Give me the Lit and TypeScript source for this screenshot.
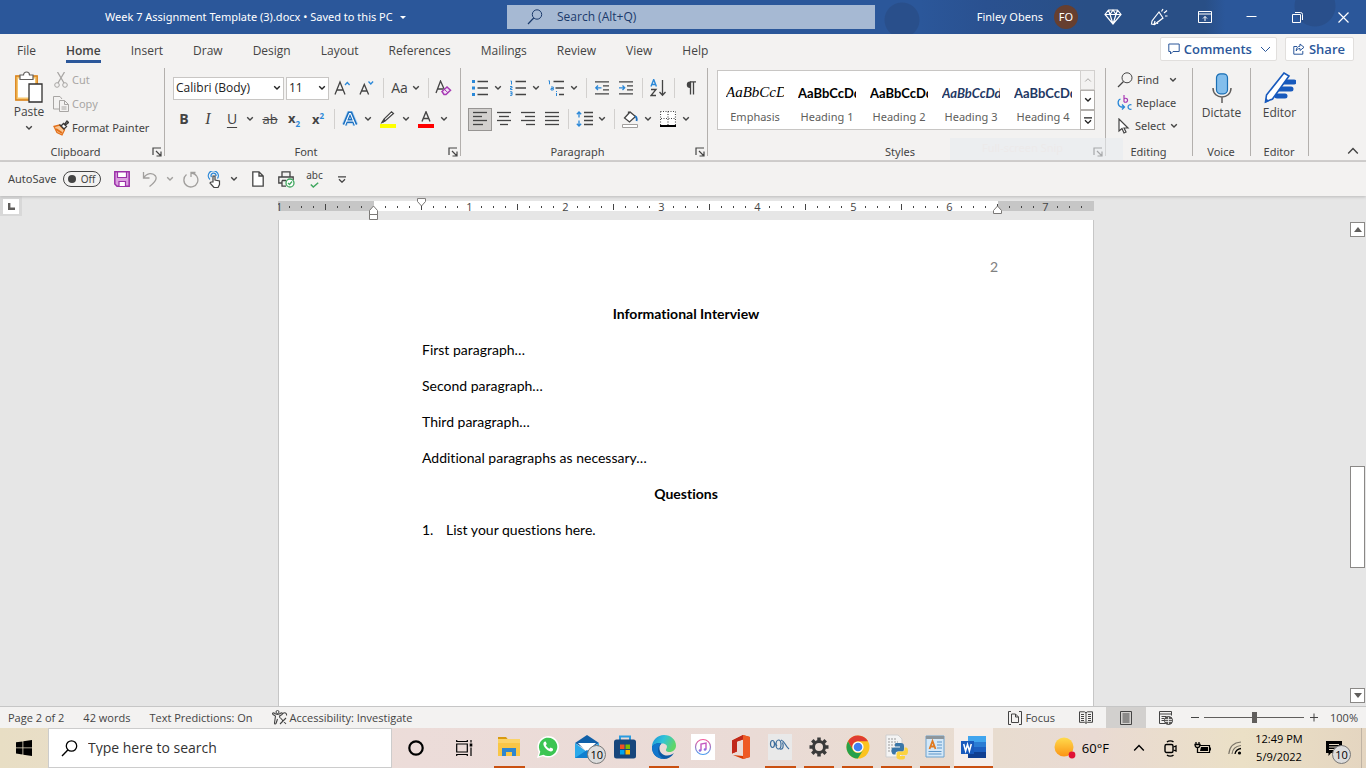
import { LitElement, html, svg, css, nothing, TemplateResult } from "lit";
import { customElement, state } from "lit/decorators.js";
import { classMap } from "lit/directives/class-map.js";

const icon = (w: number, h: number, body: unknown) =>
  html`<svg width=${w} height=${h} viewBox="0 0 ${w} ${h}" fill="none" stroke="currentColor" aria-hidden="true">${body}</svg>`;

const chevron = () => icon(8, 6, svg`<path d="M1.2 1.2 4 4 6.8 1.2" stroke-width="1.4"/>`);

const launcher = (name: string) => html`<button class="launcher" aria-label="${name} settings">
  ${icon(10, 10, svg`<path d="M1 8V1h8M4 4l4.500 4.500M9 4.500V9H4.500" stroke-width="1.200"/>`)}
</button>`;

const lines = (widths: [number, number][]) =>
  icon(16, 16, svg`${widths.map(([x, w], i) => svg`<path d="M${x} ${1.5 + i * 4}h${w}" stroke-width="1.300"/>`)}`);

const glyph = {
  diamond: icon(18, 16, svg`<path d="M4.500 1h9L17 5.500 9 15 1 5.500zM1 5.500h16M6 5.500 9 15l3-9.500M4.500 1 6 5.500 9 1l3 4.500L13.500 1" stroke-width="1.200"/>`),
  mega: icon(18, 18, svg`<path d="M9 4 2 13l-.500 3 3 .500L13 10zM9 4l4 6M5 13l-1 4M8 13l-.500 3M11.500 3.500 13 1M14 5l3-2.500M15 8h2.500" stroke-width="1.200"/>`),
  ribbonMode: icon(14, 12, svg`<path d="M.5.500h13v11H.5zM.5 3h13M7 10V5.500M5 7.500l2-2 2 2"/>`),
  minimise: icon(11, 11, svg`<path d="M.5 4.500h10"/>`),
  restore: icon(11, 11, svg`<path d="M.5 2.500h8v8h-8zM3 .500h5.500a2 2 0 0 1 2 2V8"/>`),
  close: icon(11, 11, svg`<path d="m.5.500 10 10M10.500.500l-10 10" stroke-width="1.200"/>`),
  search: icon(16, 16, svg`<circle cx="10" cy="5.500" r="4.700"/><path d="M6.700 9 1 15" stroke-width="1.200"/>`),
  comment: icon(12, 12, svg`<path d="M.8 1h10.400v7.500H5L2.500 11V8.500H.8z"/>`),
  share: icon(12, 12, svg`<path d="M4 3.500H.8v7.700h9V8M7 1l4 3.300-4 3.200V5.500C5 5.500 4 6.500 3.200 8c0-3 1.500-4.800 3.800-4.800z"/>`),
  paste: icon(28, 32, svg`<path d="M1.500 6h20v22h-20z" fill="#fff" stroke="#f6c66c" stroke-width="3"/><path d="M.8 5h21.400v24H.8z" stroke="#d8801c" stroke-width="1.300"/><path d="M5 8.500V4h3.500a3 3 0 0 1 6 0H18v4.500z" fill="#fff" stroke="#605e5c" stroke-width="1.200"/><path d="M14 13h13v18H14z" fill="#fff" stroke="#323130" stroke-width="1.300"/>`),
  cut: icon(16, 16, svg`<path d="M4.500 0 11 11M11.500 0 5 11" stroke-width="1.300"/><circle cx="4" cy="13" r="2.300"/><circle cx="12" cy="13" r="2.300"/>`),
  copy: icon(16, 16, svg`<path d="M6 13H.5V.5H7L9 3M6.500 4.500h5l4 4v7h-9zM11.500 4.500v4h4M8.500 11h5M8.500 13h5"/>`),
  brush: icon(16, 16, svg`<path d="M1 6.500 6.500 5l5 5L9 15 4 12.500z" fill="#f8c795" stroke="#e3701a" stroke-width="1.300"/><path d="m3 9 6 4" stroke="#e3701a" stroke-width="2"/><path d="m6.500 4.500 5 5M8 6l2.500-2.500 3 3L11 9M11.500 4.500 14 1l1.500 1.500L12.500 5" fill="#fff" stroke="#3b3a39" stroke-width="1.300"/>`),
  grow: icon(18, 16, svg`<path d="M1 14.500 6 2l5 12.500M3 10h6" stroke-width="1.300"/><path d="m11 5 2.300-2.500L15.600 5" stroke="#2b88d8" stroke-width="1.300"/>`),
  shrink: icon(18, 16, svg`<path d="M2 14.500 6.300 4.500l4.300 10M3.500 11h5.500" stroke-width="1.300"/><path d="m10.500 1.500 2.300 2.500 2.300-2.500" stroke="#2b88d8" stroke-width="1.300"/>`),
  erase: icon(18, 16, svg`<path d="M1 13 5.500 1 10 11M2.500 9H8" stroke-width="1.300"/><path d="m7 11.500 5-4.500 3.500 3.300L11 14.500H9z" fill="#f2e4f4" stroke="#a83ab5" stroke-width="1.500"/><path d="m9.500 9.500 3.500 3.300" stroke="#a83ab5"/>`),
  outlineA: icon(16, 16, svg`<path d="M2.500 14 7.300 2.500h1.400L13.500 14M4.500 10h7" stroke="#b4d6f2" stroke-width="5.500"/><path d="M2.500 14 7.300 2.500h1.400L13.500 14M4.500 10h7" stroke="#1a6fc0" stroke-width="3.800"/><path d="M2.500 14.500 7.500 2.500h1L13.500 14.500M4.500 10h7" stroke="#fff" stroke-width="1.100"/>`),
  highlight: icon(16, 17, svg`<path d="M0 13h16v4H0z" fill="#ff0" stroke="none"/><path d="M2 11.500 5 10 13.500 2.500 11.500 .8 4 8zM5 10 4 8" fill="#fff" stroke-width="1.200"/><path d="m1 11.500 3-3 1.500 1.500-2 1.500z" fill="currentColor" stroke="none"/>`),
  fontColour: icon(16, 17, svg`<path d="M0 13h16v4H0z" fill="#f00" stroke="none"/><path d="M4 10.500 8 .800l4 9.700M5.300 7.500h5.400" stroke-width="1.400"/>`),
  bullets: icon(16, 16, svg`<path d="M0 0h3v3H0zM0 6.500h3v3H0zM0 13h3v3H0z" fill="#2b88d8" stroke="none"/><path d="M5.500 1.500H16M5.500 8H16M5.500 14.500H16" stroke-width="1.300"/>`),
  numbers: icon(16, 16, svg`<path d="M.5 1h1v3.500M0 6.500h2v1.500H.5v1.500h2M0 11.800h2v3.500H0M.5 13.500H2" stroke="#2b88d8"/><path d="M5.500 1.500H16M5.500 8H16M5.500 14.500H16" stroke-width="1.300"/>`),
  multi: icon(16, 16, svg`<path d="M.5.800h1v3.500M3 7h2.300v3H3V8.500h2M8.500 13v3M8.500 11v1" stroke="#2b88d8"/><path d="M5.500 1.500H16M7.500 8H16M11 14.500h5" stroke-width="1.300"/>`),
  outdent: icon(14, 14, svg`<path d="M0 .8h14M8 4.800h6M8 8.800h6M0 12.800h14" stroke-width="1.300"/><path d="M6.500 6.800H.8M3 4.500.8 6.800 3 9" stroke="#2b88d8" stroke-width="1.300"/>`),
  indent: icon(14, 14, svg`<path d="M0 .8h14M8 4.800h6M8 8.800h6M0 12.800h14" stroke-width="1.300"/><path d="M0 6.800h5.700M3.500 4.500l2.200 2.300L3.500 9" stroke="#2b88d8" stroke-width="1.300"/>`),
  sort: icon(17, 18, svg`<path d="m1 7.500 2.700-7 2.700 7M2 5.500h3.400" stroke="#2b88d8" stroke-width="1.400"/><path d="M1 10.500h5L1 16.500h5M12.500 1v15M9.500 13l3 3.300 3-3.300" stroke-width="1.300"/>`),
  pilcrow: icon(11, 14, svg`<path d="M5 7a3.200 3.200 0 0 1 0-6.400H6V7z" fill="currentColor" stroke="none"/><path d="M5 .8h6M5.500 1v12.500M8.500 1v12.500" stroke-width="1.300"/>`),
  left: lines([[1, 14], [1, 9], [1, 14], [1, 10]]),
  centre: lines([[1, 14], [3, 10], [1, 14], [4, 8]]),
  right: lines([[1, 14], [5, 10], [1, 14], [6, 9]]),
  justify: lines([[1, 14], [1, 14], [1, 14], [1, 14]]),
  spacing: icon(17, 16, svg`<path d="M3 1v5.500M3 9.500V15M.8 3.200 3 1l2.200 2.200M.8 12.800 3 15l2.200-2.200" stroke="#2b88d8" stroke-width="1.300"/><path d="M8 1.500h9M8 5.500h9M8 9.500h9M8 13.500h9" stroke-width="1.300"/>`),
  bucket: icon(16, 17, svg`<path d="m8 1-5.500 6 5 4 6-5.500zM6.500 3V.500" stroke-width="1.300" fill="#fff"/><path d="M13 5c2 1 2 3 1.500 5" stroke="#1a6fc0" stroke-width="1.800"/><path d="M.5 13.500h15v3H.5z" fill="#fff" stroke="#a19f9d"/>`),
  borders: icon(16, 16, svg`<path d="M0 0h16v15H0z" fill="#fff" stroke="none"/><path d="M.5.500h15v14M.5.500v14M8 .500v14M1 7.500h14" stroke-dasharray="1 1.500" stroke-width="1.200"/><path d="M0 15h16" stroke="#000" stroke-width="2"/>`),
  lens: icon(16, 16, svg`<circle cx="10" cy="5.800" r="5"/><path d="M6.500 9.500 1 15" stroke-width="1.300"/>`),
  replace: icon(15, 16, svg`<path d="M7 0v7M7 4a2 2 0 1 1 0 2.500" stroke="#a83ab5" stroke-width="1.200"/><path d="M14.500 10a2.300 2.300 0 1 0 0 4M3.500 4C.5 5 0 10 4 12h3M5 9.500l2.500 2.500L5 14.500" stroke="#2b88d8" stroke-width="1.300"/>`),
  arrow: icon(14, 16, svg`<path d="M2 1v12l3-2.500L7 15l2-1-2-4h4z" fill="#fff" stroke-width="1.200"/>`),
  mic: icon(20, 30, svg`<rect x="4.500" y=".8" width="11" height="20" rx="4" fill="#83beec" stroke="#1a6fb5" stroke-width="1.200"/><path d="M1 15c0 12 18 12 18 0M10 24v6" stroke="#605e5c" stroke-width="1.500"/>`),
  editor: icon(32, 32, svg`<path d="M19 10h11M15 17h12M13 24h8" stroke="#185abd" stroke-width="5" stroke-linecap="round"/><path d="M2.500 23 20 1l5 3L8.500 27 1.500 30z" fill="#fff" stroke="#185abd" stroke-width="1.600"/><path d="m2 26 3 3-4 2z" fill="#185abd" stroke="none"/>`),
  up: icon(12, 8, svg`<path d="m1.200 6.500 4.800-5 4.800 5" stroke-width="1.400"/>`),
  save: icon(16, 16, svg`<path d="M.8.800h14.400v14.400H3L.8 13z" fill="#dba0e0" stroke="#9b30a8" stroke-width="1.500"/><path d="M3.500 1h9v5.500h-9zM5 15v-4.500h6.500V15" fill="#fff" stroke="#9b30a8" stroke-width="1.200"/>`),
  undo: icon(16, 16, svg`<path d="M1.500 1v6h6M1.500 7C5 1.500 11 1.500 13.500 5c2 3 0 6-6 10.500" stroke-width="1.300"/>`),
  redo: icon(17, 17, svg`<path d="M3.500 1.500H8v4.500M7.500 2A7 7 0 1 0 12.500 3.500" transform="matrix(-1 0 0 1 17 0)" stroke-width="1.300"/>`),
  touch: icon(14, 17, svg`<path d="M3 8.500a5 5 0 1 1 7.500-1M4.500 6a2.500 2.500 0 1 1 4.500-1" stroke="#2b88d8" stroke-width="1.300"/><path d="M6 11V5h2v4l4.500 1v3.500L11 16.500H7L3 12l1-1z" fill="#fff" stroke-width="1.200"/>`),
  page: icon(12, 16, svg`<path d="M.8.800H7l4.200 4.200v10.200H.8zM7 .800V5h4.200" fill="#fff" stroke-width="1.300"/>`),
  print: icon(17, 17, svg`<path d="M4 6V.800h8V6M4 12H.8V6h14.400v3M4 9.500h4M4 9.500v5.700h4" stroke-width="1.300"/><circle cx="12" cy="12" r="4" fill="#fff" stroke="#3fa75f" stroke-width="1.300"/><path d="m10 12 1.500 1.500 2.500-3" stroke="#3fa75f" stroke-width="1.300"/>`),
  tick: icon(9, 6, svg`<path d="m.8 2.500 2.500 2.500L8.200.8" stroke="#3fa75f" stroke-width="1.500"/>`),
  more: icon(8, 7, svg`<path d="M0 .8h8M1 3.200l3 3 3-3" stroke-width="1.300"/>`),
  tabStop: icon(7, 7, svg`<path d="M1.200 0v5.800H7" stroke-width="2.400"/>`),
  access: icon(16, 15, svg`<circle cx="5.500" cy="2" r="1.500"/><path d="M1 4.500c-1-1 0-2 1-1.500 2 1.500 5 1.500 7 0 1-.500 2 .5 1 1.500L7.500 6l.5 2M3.500 6 1 4.500M3.500 6 2.500 13c0 1.500 1.500 1 1.700 0L5.500 9M11 3.500c1.500-1.500 4-.500 3.500 2M8.500 8l5.500 6M14 8l-6 6" stroke-width="1.100"/>`),
  focus: icon(14, 14, svg`<path d="M3 .500H.5V13.500H3M11 .500h2.500v13H11M3.500 3h4l3 3v5.500h-7zM7.500 3v3h3"/>`),
  read: icon(14, 13, svg`<path d="M.5.800h5l1.500 1 1.500-1h5v10.500h-5L7 12.500l-1.500-1.200h-5zM7 2v10M2 3.500h3M2 5.500h3M2 7.500h3M2 9.500h3M9 3.500h3M9 5.500h3M9 7.500h3M9 9.500h3"/>`),
  layout: icon(12, 14, svg`<path d="M.5.500h11v13H.5zM2.500 3h7M2.500 5h7M2.500 7h7M2.500 9h7M2.500 11h7"/>`),
  web: icon(14, 14, svg`<path d="M6 12.500H.5V.500h12v4M.5 3h12M2.500 5.500h5M2.500 7.500h3M2.500 9.500h3"/><circle cx="9.500" cy="9.500" r="4" fill="#605e5c"/><path d="M6 8.500h7M6 10.500h7M9.500 6v7" stroke="#f3f2f1" stroke-width=".800"/>`),
};

const task = {
  windows: icon(16, 16, svg`<path d="M0 2.300 6.500 1.400v6.100H0zM7.300 1.300 16 0v7.500H7.300zM0 8.300h6.500v6.200L0 13.600zM7.300 8.300H16V16l-8.700-1.300z" fill="#000" stroke="none"/>`),
  search: icon(17, 17, svg`<circle cx="10.500" cy="6" r="5.200" stroke-width="1.300"/><path d="M6.800 10 1 16" stroke-width="1.400"/>`),
  cortana: icon(16, 16, svg`<circle cx="8" cy="8" r="6.700" stroke-width="2.200"/>`),
  view: icon(17, 16, svg`<path d="M.7 4h10.600v8H.7zM.7 0v2M11.300 0v2M.7 14V16M11.300 14V16M.7 1.500h10.600M.7 14.500h10.600M15 0v2.500M15 7.500V16" stroke-width="1.200"/><path d="M13.700 3.500h2.600v3h-2.600z" fill="#000" stroke="none"/>`),
  explorer: icon(24, 22, svg`<g stroke="none"><path d="M1 1h8l2 2.500H1z" fill="#d99a10"/><path d="M1 3h22v17H1z" fill="#fbd367"/><path d="M1 7h22v13H1z" fill="#f9c646"/><path d="M5 12h14v8h-4v-4H9v4H5z" fill="#2e86cf"/></g>`),
  whatsapp: icon(24, 24, svg`<path d="M1 23 2.700 17A10.800 10.800 0 1 1 7 21.300z" fill="#fff" stroke="none"/><path d="m3 21 1.300-4.300A9.200 9.200 0 1 1 7.500 19.800z" fill="#3cc552" stroke="none"/><path d="M8.300 6.800c-2 2-.5 5 2.200 7.500 2.500 2.300 5 3 6.500 1v-1.600L14.700 12.500l-1.400 1.300c-1.600-.8-2.800-2-3.500-3.500l1-1.200L9.700 6.600z" fill="#fff" stroke="none"/>`),
  mail: icon(24, 24, svg`<g stroke="none"><path d="M0 8 12 0l12 8-12 7z" fill="#0f5fa8"/><path d="M3 8h18l-9 9z" fill="#fff"/><path d="M0 8v15h24V8l-12 9z" fill="#2aa9ea"/><path d="M0 23 12 15l12 8z" fill="#0f7fd0"/></g>`),
  store: icon(24, 26, svg`<path d="M7 6V2.500h10V6" stroke="#2b9be0" stroke-width="2"/><rect x="1" y="5.500" width="22" height="19" rx="2.500" fill="#17467c" stroke="none"/><g stroke="none"><path d="M7 10.500h4.500V15H7z" fill="#f25022"/><path d="M12.500 10.500H17V15h-4.500z" fill="#7fba00"/><path d="M7 16h4.500v4.500H7z" fill="#00a4ef"/><path d="M12.500 16H17v4.500h-4.500z" fill="#ffb900"/></g>`),
  edge: icon(24, 24, svg`<defs><linearGradient id="eg" x1="0" y1="0" x2="1" y2=".400"><stop offset="0" stop-color="#1b8fd8"/><stop offset=".5" stop-color="#31c3d8"/><stop offset="1" stop-color="#5fd668"/></linearGradient></defs><g stroke="none"><path d="M0 12C0 5 5.500 0 12 0c7 0 12 5 12 10.500 0 4-3 6.500-6.500 6.500-3 0-4.500-1.500-3-3.500 1.500-2.500-.5-5-4-5C5 8.500 1 11 0 15z" fill="url(#eg)"/><path d="M0 12.500C.5 9.500 5 7.500 9.500 8.500 6 11 7 18 12 20c4 1.300 7.500 0 10-2-2.500 4-6 6-10 6C5 24 0 19 0 12.500z" fill="#0c59a4"/><path d="M9.500 8.500C5 11 4 20 12 24 5 24 0 19 0 12.500c1-3.500 5-5 9.500-4z" fill="#1276cc"/></g>`),
  itunes: icon(24, 26, svg`<defs><linearGradient id="it" x1="0" y1="0" x2="0" y2="1"><stop offset="0" stop-color="#f2589a"/><stop offset="1" stop-color="#4a9df0"/></linearGradient></defs><path d="M0 0h24v26H0z" fill="#fff" stroke="none"/><circle cx="12" cy="13" r="7.500" stroke="url(#it)" stroke-width="1.200"/><path d="M10 16.500V10l5-1v6.500" stroke="#c558c0" stroke-width="1.400"/><circle cx="9" cy="16.500" r="1.300" fill="#8d6fe0" stroke="none"/><circle cx="14" cy="15.500" r="1.300" fill="#8d6fe0" stroke="none"/>`),
  office: icon(20, 24, svg`<path d="M1 5.500 12 0l7 2v20l-7 2-10-4 10 1V4.500L6 6.500v10L1 18.500z" fill="#d83b01" stroke="none"/><path d="m12 0 7 2v20l-7 2z" fill="#ee5a24" stroke="none"/><path d="M1 5.500 12 0v4.500L6 6.500v10L1 18.500z" fill="#c0281b" stroke="none"/>`),
  snip: icon(24, 26, svg`<path d="M0 0h24v26H0z" fill="#e9e9e9" stroke="none"/><g stroke="#3c6d9c" stroke-width="1.200"><ellipse cx="4.500" cy="10" rx="2" ry="3.500"/><ellipse cx="10.500" cy="10.500" rx="2.500" ry="4.500"/><path d="M13 6c4 1 4 6 8 9M12 15c3 1 4-3 2.500-6.500M6 8l3 4"/></g>`),
  gear: icon(20, 20, svg`<circle cx="10" cy="10" r="5.500" stroke="#3a3a3a" stroke-width="3"/><g stroke="#3a3a3a" stroke-width="3.500"><path d="M10 .5V4M10 16v3.500M.5 10H4M16 10h3.500M3.300 3.300l2.400 2.400M14.300 14.300l2.400 2.400M3.300 16.700l2.400-2.400M14.300 5.700l2.400-2.400"/></g>`),
  chrome: icon(24, 24, svg`<g stroke="none"><circle cx="12" cy="12" r="11.500" fill="#fcc31e"/><path d="M2 6.200A11.500 11.500 0 0 1 22 6.300H12A6 6 0 0 0 6.800 15z" fill="#e03c31"/><path d="M2 6.200A11.500 11.500 0 0 0 11.800 23.500L17.200 15A6 6 0 0 1 6.800 15z" fill="#27a04b"/><circle cx="12" cy="12" r="5.600" fill="#fff"/><circle cx="12" cy="12" r="4.300" fill="#3f7ff0"/></g>`),
  python: icon(24, 26, svg`<path d="M2 1h12l4 4v18H2z" fill="#f4f4f4" stroke="#cfcfcf"/><path d="M4 5h8M4 8h10M4 11h7M4 14h5M4 17h4" stroke="#999" stroke-dasharray="2 1"/><g stroke="none"><path d="M12 9h5c2 0 3 1 3 3v3c0 2-1 2.500-3 2.500h-3c-2 0-2.500 1-2.500 3H10c-2 0-2.500-2-2.500-4s.5-3 2.500-3h6v-1h-5V11c0-1 0-2 1-2z" fill="#3a76a8"/><path d="M20.500 13.500H22c1.500 0 2 1.500 2 3.500s-.5 4-2 4h-6v1h5v1.500c0 1.500-1 2-3.500 2s-5-.5-5-2.500v-3c0-1.500 1-2.500 2.500-2.500h3.500c1.500 0 2-1 2-2z" fill="#fbd341"/></g>`),
  wordpad: icon(20, 26, svg`<path d="M1 2h18v21H1z" fill="#d4e8f8" stroke="#6aa2cf"/><path d="M1 2h18v3H1z" fill="#8d969c" stroke="none"/><path d="m4.500 15 3-8 3 8M5.500 12.500h4" stroke="#e07a20" stroke-width="1.800"/><path d="M12 8h5M12 11h5M12 14h5M3.500 17.500h13M3.500 20h13" stroke="#5c95c7"/>`),
  word: icon(26, 24, svg`<g stroke="none"><path d="M7 1h18v6H7z" fill="#41a5ee"/><path d="M7 7h18v5H7z" fill="#2b7cd3"/><path d="M7 12h18v5H7z" fill="#1c5fc0"/><path d="M7 17h18v6H7z" fill="#103f91"/><path d="M0 6h13v13H0z" fill="#185abd"/></g><path d="m2.700 9 1.900 7 1.900-6.500L8.400 16l1.900-7" stroke="#fff" stroke-width="1.500"/>`),
  sun: icon(24, 24, svg`<defs><linearGradient id="sn" x1="0" y1="0" x2="0" y2="1"><stop offset="0" stop-color="#ffdb4d"/><stop offset="1" stop-color="#fb9414"/></linearGradient></defs><circle cx="11" cy="11" r="9.500" fill="url(#sn)" stroke="none"/><circle cx="19" cy="19" r="3.400" fill="#e01235" stroke="none"/>`),
  meet: icon(14, 17, svg`<rect x="1" y="4.500" width="8" height="8" rx="1.500" stroke-width="1.400"/><path d="m9.500 7 2.500-1v5l-2.500-1M3 2C4.500.500 8 .500 9.500 2M3 15c1.500 1.500 5 1.500 6.500 0" stroke-width="1.300"/>`),
  battery: icon(18, 14, svg`<path d="M6 4.500h9.500v7H4" stroke-width="1.200"/><path d="M7 6h7v4H6z" fill="#000" stroke="none"/><path d="M16.300 6.500v3M2 1v2.500M5 1v2.500M1 3.500h5c0 2-1 3-2.500 3S1 5.500 1 3.500zM3.500 6.500V12" stroke-width="1.300"/>`),
  wifi: icon(14, 14, svg`<g stroke="#7a7468" stroke-width="1.200"><path d="M.8 13C1.500 6 6 1.500 13 1"/><path d="M4 13c.5-5 4-8 9-8.500"/></g><path d="M7 13c.5-3 2.500-5 6-5.500" stroke-width="1.300"/><circle cx="11.500" cy="12" r="1.600" fill="#000" stroke="none"/>`),
  notes: icon(16, 15, svg`<path d="M0 0h16v12H5l-2.500 3v-3H0z" fill="#000" stroke="none"/><path d="M3 3.500h10M3 6h10M3 8.500h6" stroke="#e9dcc6"/>`),
};

interface TaskItem { name: string; art: TemplateResult; running?: boolean; active?: boolean; badge?: string; }

const TASKS: TaskItem[] = [
  { name: "File Explorer", art: task.explorer, running: true },
  { name: "WhatsApp", art: task.whatsapp },
  { name: "Mail", art: task.mail, badge: "10" },
  { name: "Microsoft Store", art: task.store },
  { name: "Edge", art: task.edge, running: true },
  { name: "iTunes", art: task.itunes },
  { name: "Office", art: task.office },
  { name: "Snipping Tool", art: task.snip, running: true },
  { name: "Settings", art: task.gear, running: true },
  { name: "Chrome", art: task.chrome, running: true },
  { name: "Python", art: task.python, running: true },
  { name: "WordPad", art: task.wordpad, running: true },
  { name: "Word", art: task.word, running: true, active: true },
];

const TABS = ["File", "Home", "Insert", "Draw", "Design", "Layout", "References", "Mailings", "Review", "View", "Help"];

const STYLES = [
  { name: "Emphasis", sample: "AaBbCcDd", kind: "serif" },
  { name: "Heading 1", sample: "AaBbCcDd", kind: "" },
  { name: "Heading 2", sample: "AaBbCcDd", kind: "" },
  { name: "Heading 3", sample: "AaBbCcDd", kind: "navy slant" },
  { name: "Heading 4", sample: "AaBbCcDd", kind: "navy" },
];

@customElement("app-root")
export class AppRoot extends LitElement {
  @state() private tab = "Home";

  static styles = css`
    :host {
      display: flex;
      flex-direction: column;
      height: 100vh;
      overflow: hidden;
      font: 12px/16px "Open Sans", "Noto Sans", sans-serif;
      color: #444;
      background: #e6e6e6;
    }
    * { box-sizing: border-box; }
    svg { display: block; flex: none; }
    button, input, select { font: inherit; color: inherit; margin: 0; padding: 0; border: 0; background: none; }
    button { display: flex; align-items: center; justify-content: center; white-space: nowrap; }

    .title, .ribbon, .quick { font: 11px/16px "Noto Sans", "Open Sans", sans-serif; }

    .title { display: grid; grid-template-columns: minmax(0, 1fr) 368px 491px; height: 34px; flex: none; align-items: center; background: #2b579a; color: #fff; }
    .doc-name { justify-content: flex-start; gap: 7px; padding-left: 105px; }
    .caret { border: 3px solid transparent; border-top-color: #fff; border-bottom: 0; }
    .find-box { display: flex; align-items: center; gap: 14px; height: 24px; padding-left: 20px; background: #a6b9d3; color: #1b3a6b; font: 12px/16px "Open Sans", sans-serif; }
    .find-box input { flex: 1; min-width: 0; outline: 0; }
    .find-box input::placeholder { color: #1b3a6b; opacity: 1; }
    .account { display: flex; align-items: center; justify-content: flex-end; align-self: stretch;
      background:
        radial-gradient(circle at 27px 20px, #294f8b 17px, transparent 18px),
        radial-gradient(circle at 375px 30px, #2b579a 24px, transparent 25px),
        radial-gradient(circle at 440px 6px, #294f8b 20px, transparent 21px),
        linear-gradient(90deg, transparent 45px, #2a5190 110px, #294f86 210px, #294f86 330px, #2b579a 350px); }
    .user { gap: 11px; margin-right: 12px; }
    .avatar { display: grid; place-items: center; width: 24px; height: 24px; border-radius: 50%; background: #663f30; }
    .win { width: 46px; height: 34px; }

    .tabs { display: flex; height: 30px; flex: none; padding: 0 12px 0 2px; align-items: center; background: #f3f2f1; }
    .tab { flex-direction: column; height: 30px; padding: 3px 15px 0; }
    .tab .name { height: 21px; line-height: 24px; }
    .tab .bar { height: 3px; align-self: stretch; }
    .tab.on { font-weight: 600; }
    .tab.on .bar { background: #2b579a; }
    .push { flex: 1; }
    .pill { gap: 4px; height: 24px; padding: 0 8px 0 7px; margin-left: 8px; border: 1px solid #e1dfdd; border-radius: 2px; background: #fff; color: #2b579a; font-size: 13px; font-weight: 600; }
    .pill .drop { margin: 0 -3px 0 4px; display: flex; }

    .ribbon { display: flex; flex: none; height: 98px; padding: 4px 0; border-bottom: 2px solid #d0cecd; background: #f3f2f1; position: relative; }
    .group { display: flex; flex-direction: column; height: 88px; border-right: 1px solid #b3b0ad; }
    .body { flex: 1; display: flex; min-height: 0; }
    .label { display: flex; align-items: center; height: 16px; margin-bottom: -4px; padding-right: 1px; }
    .label .text { flex: 1; text-align: center; }
    .launcher { width: 12px; height: 12px; }
    .clipboard { width: 165px; }
    .font { width: 296px; }
    .paragraph { width: 247px; }
    .styles { flex: 1; min-width: 0; }
    .editing { width: 87px; }
    .single { width: 58px; }
    .rest { width: 57px; display: flex; align-items: flex-end; padding: 0 0 0 38px; }
    .rest button { height: 10px; }

    .paste { flex-direction: column; justify-content: flex-start; width: 38px; margin-left: 10px; padding-top: 3px; font: 12px/16px "Open Sans", sans-serif; }
    .paste .name { padding: 1px 0 5px; }
    .stack { display: flex; flex-direction: column; align-items: flex-start; }
    .row-btn { height: 24px; gap: 3px; }
    .dim { color: #a8a6a4; }
    .clipboard .stack { padding-left: 5px; }
    .editing .stack { padding-left: 11px; }
    .editing .row-btn { height: 23px; gap: 4px; }
    .find .drop { margin-left: 6px; }

    .rows { display: flex; flex-direction: column; gap: 7px; padding: 8px 0 0 7px; }
    .row { display: flex; align-items: center; height: 24px; font-family: "Open Sans", sans-serif; font-size: 12px; }
    .tool { width: 24px; height: 23px; flex: none; font-size: 14px; }
    .tool.on { background: #d2d0ce; outline: 1px solid #979593; outline-offset: -1px; }
    .drop-tool { width: 12px; height: 23px; margin-right: 2px; flex: none; }
    .sep { width: 1px; height: 20px; margin: 0 3px 0 4px; background: #d2d0ce; }
    .combo { display: grid; align-items: center; height: 23px; margin-right: 2px; border: 1px solid #c8c6c4; background: #fff; color: #222; }
    .combo > * { grid-area: 1 / 1; }
    .combo select { appearance: none; width: 100%; height: 21px; padding-left: 2px; outline: 0; }
    .combo svg { justify-self: end; margin-right: 2px; pointer-events: none; }
    .face { width: 111px; margin-left: 1px; }
    .size { width: 43px; }
    .case { width: 37px; gap: 4px; }
    .bold { font-weight: 700; }
    .italic { font-family: "Liberation Serif", serif; font-style: italic; font-size: 16px; }
    .under { text-decoration: underline; text-underline-offset: 3px; }
    .strike { text-decoration: line-through; font-size: 13px; }
    .script { font-weight: 700; font-size: 13px; }
    .script sub, .script sup { font-size: 8px; line-height: 8px; color: #2b88d8; }

    .gallery { display: flex; flex: 1; min-width: 0; height: 60px; margin: 2px 10px 0 9px; border: 1px solid #c8c6c4; background: #fff; }
    .cells { display: flex; flex: 1; overflow: hidden; padding-left: 1px; }
    .cell { flex: none; flex-direction: column; justify-content: flex-start; width: 72px; padding-top: 8px; color: #605e5c; }
    .sample { width: 58px; height: 30px; overflow: hidden; text-align: left; font: 700 13px/28px Lato, sans-serif; color: #000; }
    .sample.serif { font: italic 400 15px/26px "Liberation Serif", serif; }
    .sample.navy { color: #1f3864; }
    .sample.slant { font-style: italic; }
    .scroll { display: flex; flex-direction: column; width: 15px; margin: -1px; }
    .scroll button { flex: 1; border: 1px solid #b3b0ad; color: #222; }
    .scroll button:disabled { border-color: #d2d0ce; background: #f3f2f1; color: #a8a6a4; }
    .big { flex-direction: column; justify-content: flex-start; flex: 1; padding-top: 2px; font: 12px/16px "Open Sans", sans-serif; }
    .big .art { height: 35px; display: flex; align-items: center; }
    .ghost { position: absolute; left: 950px; bottom: 0; width: 173px; height: 22px; padding-left: 32px; line-height: 20px; background: #e9ecf0; color: #e8e5e6; pointer-events: none; opacity: .6; }

    .quick { display: flex; align-items: center; flex: none; height: 34px; padding-left: 8px; background: #f3f2f1; box-shadow: 0 1px 3px #bbb; position: relative; }
    .switch { display: flex; align-items: center; gap: 7px; }
    .toggle { display: flex; align-items: center; justify-content: space-between; width: 38px; height: 16px; padding: 0 5px 0 4px; border: 1px solid #444; border-radius: 8px; font-size: 10px; }
    .knob { width: 8px; height: 8px; border-radius: 50%; background: #444; }
    .quick .q { width: 24px; height: 24px; }
    .quick .q-drop { width: 16px; height: 24px; }
    .quick .first { margin-left: 9px; }
    .quick .gap { margin-left: 4px; }
    .quick .spell { flex-direction: column; gap: 2px; font-size: 10px; line-height: 9px; }
    .quiet { color: #a19f9d; }

    .canvas { display: flex; flex: 1; min-height: 0; }
    .corner { width: 22px; height: 20px; padding: 3px; background: #d8d8d8; }
    .corner button { width: 16px; height: 15px; background: #fff; color: #605e5c; }
    .desk { flex: 1; display: flex; flex-direction: column; align-items: center; min-width: 0; overflow: hidden; }
    .ruler { height: 24px; flex: none; color: #444; font-size: 11px; }
    .sheet { flex: 1; width: 816px; padding: 38px 95px 0; background: #fff; border: solid #c6c6c6; border-width: 0 1px; color: #000; font: 14px/36px Lato, sans-serif; font-variant-ligatures: none; }
    .sheet h1, .sheet p, .sheet ol { margin: 0; padding: 0; font-size: 14px; }
    .sheet h1 { text-align: center; font-weight: 700; }
    .sheet p, .sheet ol { padding-left: 48px; }
    .sheet .number { line-height: 18px; margin-bottom: 20px; text-align: right; color: #808080; }
    .sheet ol { list-style: none; }
    .sheet li { display: flex; }
    .mark { width: 24px; }

    .bar-v { display: flex; flex-direction: column; width: 16px; padding: 26px 1px 3px 0; }
    .bar-v button { height: 15px; border: 1px solid #8a8886; background: #fff; }
    .bar-v .lane { flex: 1; display: flex; flex-direction: column; }
    .bar-v .before { flex: 232; }
    .bar-v .thumb { flex: 101; border: 1px solid #8a8886; background: #fff; }
    .bar-v .after { flex: 122; }
    .tri { border: 4px solid transparent; border-bottom: 5px solid #605e5c; border-top: 0; }
    .tri.down { border: 4px solid transparent; border-top: 5px solid #605e5c; border-bottom: 0; }

    .status { display: flex; align-items: center; flex: none; height: 22px; padding: 0 8px; border-top: 1px solid #c6c6c6; background: #f3f2f1; font-size: 11px; }
    .status .facts { display: flex; gap: 19px; }
    .status .facts button { gap: 2px; }
    .mode { width: 40px; height: 21px; }
    .mode.on { background: #d2d0ce; }
    .focus { gap: 3px; margin-right: 11px; }
    .zoom { display: flex; align-items: center; gap: 5px; margin-left: 4px; }
    .zoom button { width: 9px; height: 20px; }
    .zoom input { appearance: none; width: 100px; height: 12px; background: linear-gradient(#605e5c, #605e5c) center / 100% 1px no-repeat; }
    .zoom input::-webkit-slider-thumb { appearance: none; width: 5px; height: 11px; background: #605e5c; }
    .percent { width: 40px; text-align: right; }

    .taskbar { display: flex; align-items: stretch; flex: none; height: 40px; color: #000;
      background: linear-gradient(90deg, #e8dec4, #ecdcd9 30%, #eadbd6 55%, #e8dccf 73%, #e9dad3 80%, #ebe0c6 91%, #e4d5c0); }
    .start, .sys { width: 48px; }
    .task-search { display: flex; align-items: center; gap: 10px; width: 344px; padding-left: 12px; border: 1px solid #ccc; background: #fff; font-size: 14px; }
    .task-search input { flex: 1; min-width: 0; outline: 0; }
    .task-search input::placeholder { color: #333; opacity: 1; }
    .apps { display: flex; width: 503px; margin-left: 2px; }
    .app { position: relative; flex: 1; border-bottom: 2px solid transparent; }
    .app.running::after { content: ""; position: absolute; left: 4px; right: 4px; bottom: -2px; height: 2px; background: #ca5010; }
    .app.active { background: #f5eeea; }
    .app.active::after { left: 0; right: 0; }
    .badge { display: grid; place-items: center; width: 19px; height: 19px; border: 1px solid #777; border-radius: 50%; background: #dcdcdc; font-size: 11px; position: absolute; left: 20px; top: 17px; }
    .tray { display: flex; flex: 1; justify-content: flex-end; align-items: center; }
    .weather { gap: 5px; font-size: 13px; margin-right: 14px; }
    .tray .t { width: 32px; height: 40px; }
    .clock { display: flex; flex-direction: column; align-items: center; width: 56px; font-size: 11px; line-height: 18px; }
    .bell { position: relative; width: 54px; height: 40px; }
    .bell .badge { left: 25px; top: 17px; }
    .edge-line { align-self: stretch; width: 5px; border-left: 1px solid #bfb3a4; }
  `;

  private tool(name: string, body: unknown, extra = "") {
    return html`<button class="tool ${extra}" aria-label=${name}>${body}</button>`;
  }

  private split(name: string, body: unknown, extra = "") {
    return html`${this.tool(name, body, extra)}<button class="drop-tool" aria-label="${name} options">${chevron()}</button>`;
  }

  private label(text: string, withLauncher = true) {
    return html`<div class="label"><span class="text">${text}</span>${withLauncher ? launcher(text) : nothing}</div>`;
  }

  private titleBar() {
    return html`<header class="title">
      <button class="doc-name">Week 7 Assignment Template (3).docx • Saved to this PC <span class="caret"></span></button>
      <label class="find-box">${glyph.search}<input aria-label="Search" placeholder="Search (Alt+Q)" /></label>
      <div class="account">
        <button class="user">Finley Obens <span class="avatar">FO</span></button>
        <button class="win" aria-label="Premium">${glyph.diamond}</button>
        <button class="win" aria-label="Coming soon">${glyph.mega}</button>
        <button class="win" aria-label="Ribbon display">${glyph.ribbonMode}</button>
        <button class="win" aria-label="Minimise">${glyph.minimise}</button>
        <button class="win" aria-label="Restore">${glyph.restore}</button>
        <button class="win" aria-label="Close">${glyph.close}</button>
      </div>
    </header>`;
  }

  private tabBar() {
    return html`<nav class="tabs">
      ${TABS.map((t) => html`<button class=${classMap({ tab: true, on: t === this.tab })} @click=${() => (this.tab = t)}>
        <span class="name">${t}</span><span class="bar"></span>
      </button>`)}
      <span class="push"></span>
      <button class="pill">${glyph.comment} Comments <span class="drop">${icon(11, 7, svg`<path d="m1 1 4.500 4.500L10 1"/>`)}</span></button>
      <button class="pill">${glyph.share} Share</button>
    </nav>`;
  }

  private ribbon() {
    const sep = html`<span class="sep"></span>`;
    return html`<section class="ribbon">
      <div class="group clipboard">
        <div class="body">
          <button class="paste">${glyph.paste}<span class="name">Paste</span>${chevron()}</button>
          <div class="stack">
            <button class="row-btn dim">${glyph.cut} Cut</button>
            <button class="row-btn dim">${glyph.copy} Copy</button>
            <button class="row-btn">${glyph.brush} Format Painter</button>
          </div>
        </div>
        ${this.label("Clipboard")}
      </div>
      <div class="group font">
        <div class="body rows">
          <div class="row">
            <label class="combo face"><select aria-label="Font"><option>Calibri (Body)</option></select>${chevron()}</label>
            <label class="combo size"><select aria-label="Font size"><option>11</option></select>${chevron()}</label>
            ${this.tool("Grow font", glyph.grow)}${this.tool("Shrink font", glyph.shrink)}${sep}
            <button class="tool case" aria-label="Change case">Aa ${chevron()}</button>${sep}
            ${this.tool("Clear formatting", glyph.erase)}
          </div>
          <div class="row">
            ${this.tool("Bold", "B", "bold")}${this.tool("Italic", "I", "italic")}${this.split("Underline", "U", "under")}
            ${this.tool("Strikethrough", "ab", "strike")}
            ${this.tool("Subscript", html`<span>x<sub>2</sub></span>`, "script")}
            ${this.tool("Superscript", html`<span>x<sup>2</sup></span>`, "script")}${sep}
            ${this.split("Text effects", glyph.outlineA)}${this.split("Highlight", glyph.highlight)}${this.split("Font colour", glyph.fontColour)}
          </div>
        </div>
        ${this.label("Font")}
      </div>
      <div class="group paragraph">
        <div class="body rows">
          <div class="row">
            ${this.split("Bullets", glyph.bullets)}${this.split("Numbering", glyph.numbers)}${this.split("Multilevel list", glyph.multi)}${sep}
            ${this.tool("Decrease indent", glyph.outdent)}${this.tool("Increase indent", glyph.indent)}${sep}
            ${this.tool("Sort", glyph.sort)}${sep}${this.tool("Show marks", glyph.pilcrow)}
          </div>
          <div class="row">
            ${this.tool("Align left", glyph.left, "on")}${this.tool("Centre", glyph.centre)}${this.tool("Align right", glyph.right)}${this.tool("Justify", glyph.justify)}${sep}
            ${this.split("Line spacing", glyph.spacing)}${sep}${this.split("Shading", glyph.bucket)}${this.split("Borders", glyph.borders)}
          </div>
        </div>
        ${this.label("Paragraph")}
      </div>
      <div class="group styles">
        <div class="body">
          <div class="gallery">
            <div class="cells">
              ${STYLES.map((s) => html`<button class="cell"><span class="sample ${s.kind}">${s.sample}</span><span>${s.name}</span></button>`)}
            </div>
            <div class="scroll">
              <button disabled aria-label="Previous styles">${icon(8, 6, svg`<path d="M1.200 4.500 4 1.700l2.800 2.800"/>`)}</button>
              <button aria-label="Next styles">${chevron()}</button>
              <button aria-label="All styles">${glyph.more}</button>
            </div>
          </div>
        </div>
        ${this.label("Styles")}
      </div>
      <div class="group editing">
        <div class="body"><div class="stack">
          <button class="row-btn find">${glyph.lens} Find <span class="drop">${chevron()}</span></button>
          <button class="row-btn">${glyph.replace} Replace</button>
          <button class="row-btn">${glyph.arrow} Select ${chevron()}</button>
        </div></div>
        ${this.label("Editing", false)}
      </div>
      <div class="group single">
        <div class="body"><button class="big"><span class="art">${glyph.mic}</span>Dictate</button></div>
        ${this.label("Voice", false)}
      </div>
      <div class="group single">
        <div class="body"><button class="big"><span class="art">${glyph.editor}</span>Editor</button></div>
        ${this.label("Editor", false)}
      </div>
      <div class="rest"><button aria-label="Collapse the ribbon">${glyph.up}</button></div>
      <div class="ghost">Full-screen Snip</div>
    </section>`;
  }

  private quickBar() {
    return html`<section class="quick">
      <div class="switch"><span id="auto">AutoSave</span>
        <button class="toggle" role="switch" aria-checked="false" aria-labelledby="auto"><span class="knob"></span>Off</button></div>
      <button class="q first" aria-label="Save">${glyph.save}</button>
      <button class="q quiet gap" aria-label="Undo">${glyph.undo}</button><button class="q-drop quiet" aria-label="Undo options">${chevron()}</button>
      <button class="q quiet" aria-label="Redo">${glyph.redo}</button>
      <button class="q" aria-label="Touch mode">${glyph.touch}</button><button class="q-drop" aria-label="Touch options">${chevron()}</button>
      <button class="q gap" aria-label="New document">${glyph.page}</button>
      <button class="q gap" aria-label="Print">${glyph.print}</button>
      <button class="q spell gap" aria-label="Spelling">abc${glyph.tick}</button>
      <button class="q gap" aria-label="Customise toolbar">${glyph.more}</button>
    </section>`;
  }

  private ruler() {
    const marks: unknown[] = [];
    for (let i = -7; i <= 59; i++) {
      const x = 95.5 + i * 12;
      if (i === 0) continue;
      if (i % 8 === 0) marks.push(svg`<text x=${x} y="15" text-anchor="middle" fill="currentColor" stroke="none">${i / 8}</text>`);
      else marks.push(i % 4 === 0 ? svg`<path d="M${x} 8v6"/>` : svg`<path d="M${x} 10v2"/>`);
    }
    return html`<div class="ruler">
      <svg width="816" height="24" viewBox="0 0 816 24" fill="none" stroke="currentColor" role="img" aria-label="Ruler">
        <path d="M0 5h816v10H0z" fill="#c6c6c6" stroke="none"/>
        <path d="M96 5h624v10H96z" fill="#fff" stroke="none"/>
        <text x="-2" y="15" fill="currentColor" stroke="none">1</text>
        ${marks}
        <g fill="#fff" stroke="#7a7876">
          <path d="M139.500 2.500h8v3L143.500 10l-4-4.500z"/>
          <path d="M91.500 18.500h8v5h-8zM91.500 18.500v-4l4-4.500 4 4.500v4z"/>
          <path d="M715.500 17.500v-3l4-4.500 4 4.500v3z"/>
        </g>
      </svg>
    </div>`;
  }

  private canvas() {
    return html`<main class="canvas">
      <div class="corner"><button aria-label="Tab stop">${glyph.tabStop}</button></div>
      <div class="desk">
        ${this.ruler()}
        <article class="sheet">
          <p class="number">2</p>
          <h1>Informational Interview</h1>
          <p>First paragraph…</p>
          <p>Second paragraph…</p>
          <p>Third paragraph…</p>
          <p>Additional paragraphs as necessary…</p>
          <h1>Questions</h1>
          <ol><li><span class="mark">1.</span>List your questions here.</li></ol>
        </article>
      </div>
      <div class="bar-v">
        <button aria-label="Scroll up"><span class="tri"></span></button>
        <div class="lane"><span class="before"></span><span class="thumb"></span><span class="after"></span></div>
        <button aria-label="Scroll down"><span class="tri down"></span></button>
      </div>
    </main>`;
  }

  private statusBar() {
    return html`<footer class="status">
      <div class="facts"><button>Page 2 of 2</button><button>42 words</button><button>Text Predictions: On</button>
        <button>${glyph.access} Accessibility: Investigate</button></div>
      <span class="push"></span>
      <button class="focus">${glyph.focus} Focus</button>
      <button class="mode" aria-label="Read mode">${glyph.read}</button>
      <button class="mode on" aria-label="Print layout">${glyph.layout}</button>
      <button class="mode" aria-label="Web layout">${glyph.web}</button>
      <div class="zoom">
        <button aria-label="Zoom out">${icon(8, 9, svg`<path d="M0 4.500h8"/>`)}</button>
        <input type="range" aria-label="Zoom" min="0" max="100" value="50" />
        <button aria-label="Zoom in">${icon(8, 9, svg`<path d="M0 4.500h8M4 .500v8"/>`)}</button>
      </div>
      <span class="percent">100%</span>
    </footer>`;
  }

  private taskBar() {
    return html`<nav class="taskbar">
      <button class="start" aria-label="Start">${task.windows}</button>
      <label class="task-search">${task.search}<input aria-label="Search Windows" placeholder="Type here to search" /></label>
      <button class="sys" aria-label="Cortana">${task.cortana}</button>
      <button class="sys" aria-label="Task view">${task.view}</button>
      <div class="apps">
        ${TASKS.map((t) => html`<button class=${classMap({ app: true, running: !!t.running, active: !!t.active })} aria-label=${t.name}>
          ${t.art}${t.badge ? html`<span class="badge">${t.badge}</span>` : nothing}
        </button>`)}
      </div>
      <div class="tray">
        <button class="weather">${task.sun} 60°F</button>
        <button class="t" aria-label="Hidden icons">${glyph.up}</button>
        <button class="t" aria-label="Camera">${task.meet}</button>
        <button class="t" aria-label="Battery">${task.battery}</button>
        <button class="t" aria-label="Network">${task.wifi}</button>
        <button class="clock"><span>12:49 PM</span><span>5/9/2022</span></button>
        <button class="bell" aria-label="Notifications">${task.notes}<span class="badge">10</span></button>
        <span class="edge-line"></span>
      </div>
    </nav>`;
  }

  render() {
    return html`${this.titleBar()}${this.tabBar()}${this.ribbon()}${this.quickBar()}${this.canvas()}${this.statusBar()}${this.taskBar()}`;
  }
}
